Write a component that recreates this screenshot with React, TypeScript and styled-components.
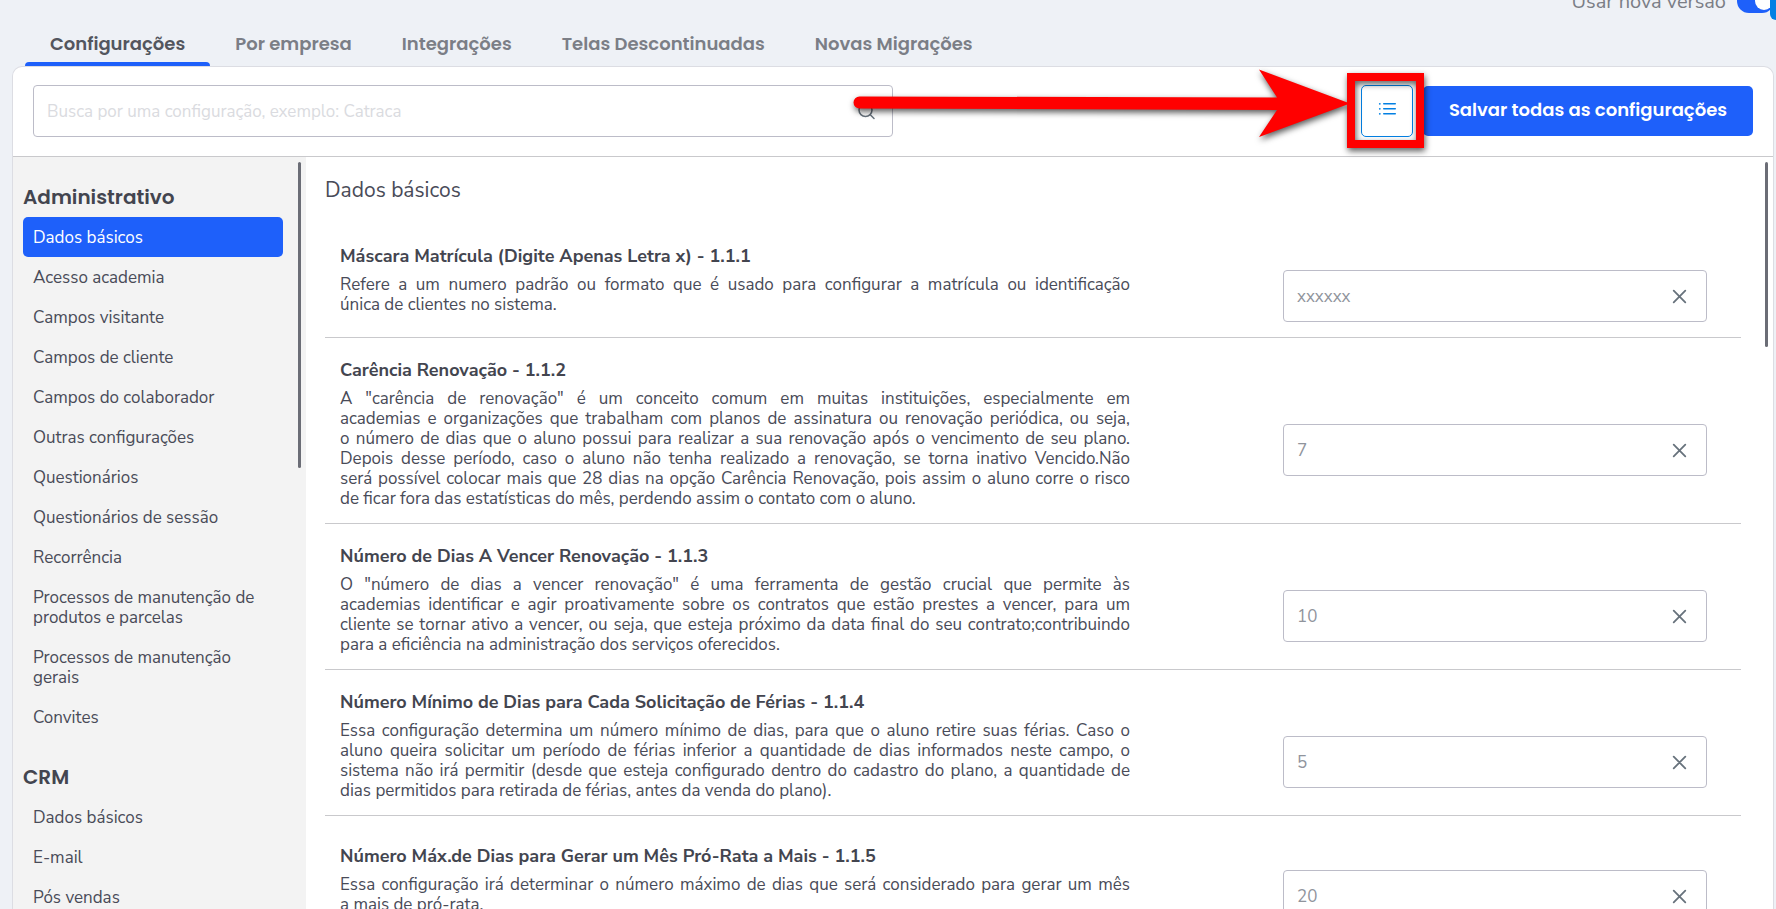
import React from "react";
import styled, { createGlobalStyle } from "styled-components";

const bodyFont = `"Nunito Sans", Lato, "Open Sans", sans-serif`;
const headingFont = `Poppins, Inter, "Noto Sans", sans-serif`;

const color = {
  page: "#eef1f6",
  blue: "#1e60fa",
  link: "#0380e3",
  text: "#494b58",
  heading: "#43454f",
  muted: "#7b7e86",
  value: "#90949c",
  placeholder: "#dadbe0",
  inputBorder: "#bcbcc8",
  line: "#c9c9cc",
  cardBorder: "#dcdde3",
  thumb: "#6b6d76",
  icon: "#67727c",
  mark: "#ff0000",
};

const GlobalStyle = createGlobalStyle`
  * { box-sizing: border-box; }
  body {
    margin: 0;
    background: ${color.page};
    color: ${color.text};
    font: 400 17px/20px ${bodyFont};
    overflow: hidden;
  }
  button, input { font: inherit; }
`;

const Page = styled.div`
  display: flex;
  flex-direction: column;
  height: 100vh;
  padding: 0 2px 0 12px;
  overflow: hidden;
`;

const VersionBar = styled.div`
  display: flex;
  justify-content: flex-end;
  height: 22px;
`;

const VersionToggle = styled.label`
  display: flex;
  align-items: center;
  gap: 11px;
  height: 24px;
  margin-top: -11px;
  color: ${color.muted};
  font-size: 20px;
  white-space: nowrap;
`;

const VersionText = styled.span`
  padding-top: 2px;
`;

const Switch = styled.input`
  appearance: none;
  width: 37px;
  height: 24px;
  margin: 0;
  border-radius: 12px;
  background: ${color.blue};

  &::before {
    content: "";
    display: block;
    width: 18px;
    height: 18px;
    margin: 3px 1px 3px auto;
    border-radius: 50%;
    background: #fff;
  }
`;

const SideHandle = styled.button`
  position: absolute;
  top: 0;
  right: 0;
  width: 6px;
  height: 20px;
  padding: 0;
  border: 0;
  border-bottom-left-radius: 6px;
  background: ${color.link};
`;

const Tabs = styled.nav`
  display: flex;
  padding-left: 13px;
`;

const Tab = styled.a<{ $active?: boolean }>`
  position: relative;
  height: 44px;
  padding: 12px 25px;
  color: ${(p) => (p.$active ? "#53565e" : color.muted)};
  font: 600 18px/20px ${headingFont};
  text-decoration: none;
  white-space: nowrap;

  &::after {
    content: "";
    position: absolute;
    inset: auto 0 0;
    height: 4px;
    border-radius: 4px 4px 0 0;
    background: ${(p) => (p.$active ? color.blue : "transparent")};
  }
`;

const Card = styled.main`
  display: flex;
  flex-direction: column;
  flex: 1;
  min-height: 0;
  border: 1px solid ${color.cardBorder};
  border-bottom: 0;
  border-radius: 10px 10px 0 0;
  background: #fff;
`;

const Toolbar = styled.div`
  display: flex;
  justify-content: space-between;
  align-items: center;
  height: 90px;
  flex: none;
  padding: 0 20px 1px;
  border-bottom: 1px solid ${color.line};
`;

const Field = styled.div`
  display: flex;
  align-items: center;
  height: 52px;
  padding-right: 19px;
  border: 1px solid ${color.inputBorder};
  border-radius: 4px;
  background: #fff;
`;

const SearchField = styled(Field)`
  width: 50%;
  padding-right: 17px;
`;

const TextInput = styled.input`
  flex: 1;
  min-width: 0;
  height: 48px;
  padding: 0 13px;
  border: 0;
  outline: 0;
  background: transparent;
  color: ${color.value};

  &::placeholder {
    color: ${color.placeholder};
    opacity: 1;
  }
`;

const IconButton = styled.button`
  display: flex;
  padding: 0;
  border: 0;
  background: none;
  color: ${color.icon};
`;

const Actions = styled.div`
  display: flex;
  align-items: center;
  gap: 10px;
`;

const MarkedSpot = styled.div`
  position: relative;
`;

const ListButton = styled.button`
  display: flex;
  align-items: center;
  justify-content: center;
  width: 52px;
  height: 52px;
  padding: 0 0 4px;
  border: 1px solid ${color.link};
  border-radius: 5px;
  background: #fff;
  color: ${color.link};
`;

const SaveButton = styled.button`
  height: 50px;
  min-width: 330px;
  padding: 0 24px 2px;
  border: 0;
  border-radius: 5px;
  background: ${color.blue};
  color: #fff;
  font: 600 18px/20px ${headingFont};
  white-space: nowrap;
`;

const Annotation = styled.svg`
  position: absolute;
  top: -25px;
  right: -20px;
  pointer-events: none;
  overflow: visible;
  filter: drop-shadow(1px 3px 3px rgba(0, 0, 0, 0.65));
`;

const Panels = styled.div`
  display: flex;
  flex: 1;
  min-height: 0;
`;

const Sidebar = styled.aside`
  position: relative;
  flex: none;
  width: 293px;
  padding: 0 23px 0 10px;
  background: #f3f3f3;
  overflow: hidden;
`;

const ScrollThumb = styled.div<{ $length: number }>`
  position: absolute;
  top: 5px;
  right: 5px;
  width: 3px;
  height: ${(p) => p.$length}px;
  border-radius: 2px;
  background: ${color.thumb};
`;

const Group = styled.section`
  padding-top: 20px;
`;

const GroupTitle = styled.h2`
  margin: 0;
  color: ${color.heading};
  font: 600 20px/40px ${headingFont};
`;

const MenuLink = styled.a<{ $active?: boolean }>`
  display: block;
  padding: 11px 10px 9px;
  border-radius: 5px;
  background: ${(p) => (p.$active ? color.blue : "transparent")};
  color: ${(p) => (p.$active ? "#fff" : color.text)};
  text-decoration: none;
`;

const Content = styled.section`
  position: relative;
  flex: 1;
  min-width: 0;
  padding: 17px 32px 0 19px;
  overflow: hidden;
`;

const ContentTitle = styled.h1`
  margin: 0;
  padding-bottom: 10px;
  font-size: 21px;
  font-weight: 400;
  line-height: 32px;
`;

const Setting = styled.div`
  display: grid;
  grid-template-columns: 790fr 424fr;
  column-gap: 153px;
  align-items: center;
  padding: 15px 34px 15px 15px;
  border-bottom: 1px solid ${color.line};
`;

const SettingText = styled.div`
  padding-top: 7px;
`;

const SettingName = styled.label`
  display: block;
  color: ${color.heading};
  font-size: 18px;
  font-weight: 700;
`;

const Description = styled.p`
  margin: 9px 0 -1px;
`;

const Line = styled.span`
  display: block;
  text-align: justify;
  text-align-last: justify;

  &:last-child {
    text-align-last: left;
  }
`;

const SettingField = styled.div`
  padding-top: 39px;
`;

const ListIcon = () => (
  <svg width="18" height="14" viewBox="0 0 18 14" fill="currentColor" aria-hidden="true">
    <rect x="5" y="1" width="13" height="1.500" rx="0.700" />
    <rect x="5" y="6" width="13" height="1.500" rx="0.700" />
    <rect x="5" y="11" width="13" height="1.500" rx="0.700" />
    <circle cx="1.800" cy="1.800" r="0.900" />
    <circle cx="1.800" cy="6.800" r="0.900" />
    <circle cx="1.800" cy="11.800" r="0.900" />
  </svg>
);

const SearchIcon = () => (
  <svg width="17" height="17" viewBox="0 0 17 17" fill="none" stroke="currentColor" strokeWidth="1.5" strokeLinecap="round" aria-hidden="true">
    <circle cx="7.5" cy="7" r="6.5" />
    <path d="M12.300 11.700 16 15.500" />
  </svg>
);

const ClearIcon = () => (
  <svg width="15" height="15" viewBox="0 0 15 15" fill="none" stroke="currentColor" strokeWidth="1.8" strokeLinecap="round" aria-hidden="true">
    <path d="M1.7 1.7 13.3 13.3M13.3 1.7 1.7 13.3" />
  </svg>
);

const tabs = ["Configurações", "Por empresa", "Integrações", "Telas Descontinuadas", "Novas Migrações"];

const groups = [
  {
    title: "Administrativo",
    items: [
      "Dados básicos",
      "Acesso academia",
      "Campos visitante",
      "Campos de cliente",
      "Campos do colaborador",
      "Outras configurações",
      "Questionários",
      "Questionários de sessão",
      "Recorrência",
      "Processos de manutenção de produtos e parcelas",
      "Processos de manutenção gerais",
      "Convites",
    ],
  },
  { title: "CRM", items: ["Dados básicos", "E-mail", "Pós vendas"] },
];

const settings = [
  {
    code: "1.1.1",
    name: "Máscara Matrícula (Digite Apenas Letra x)",
    value: "xxxxxx",
    lines: [
      "Refere a um numero padrão ou formato que é usado para configurar a matrícula ou identificação",
      "única de clientes no sistema.",
    ],
  },
  {
    code: "1.1.2",
    name: "Carência Renovação",
    value: "7",
    lines: [
      'A "carência de renovação" é um conceito comum em muitas instituições, especialmente em',
      "academias e organizações que trabalham com planos de assinatura ou renovação periódica, ou seja,",
      "o número de dias que o aluno possui para realizar a sua renovação após o vencimento de seu plano.",
      "Depois desse período, caso o aluno não tenha realizado a renovação, se torna inativo Vencido.Não",
      "será possível colocar mais que 28 dias na opção Carência Renovação, pois assim o aluno corre o risco",
      "de ficar fora das estatísticas do mês, perdendo assim o contato com o aluno.",
    ],
  },
  {
    code: "1.1.3",
    name: "Número de Dias A Vencer Renovação",
    value: "10",
    lines: [
      'O "número de dias a vencer renovação" é uma ferramenta de gestão crucial que permite às',
      "academias identificar e agir proativamente sobre os contratos que estão prestes a vencer, para um",
      "cliente se tornar ativo a vencer, ou seja, que esteja próximo da data final do seu contrato;contribuindo",
      "para a eficiência na administração dos serviços oferecidos.",
    ],
  },
  {
    code: "1.1.4",
    name: "Número Mínimo de Dias para Cada Solicitação de Férias",
    value: "5",
    lines: [
      "Essa configuração determina um número mínimo de dias, para que o aluno retire suas férias. Caso o",
      "aluno queira solicitar um período de férias inferior a quantidade de dias informados neste campo, o",
      "sistema não irá permitir (desde que esteja configurado dentro do cadastro do plano, a quantidade de",
      "dias permitidos para retirada de férias, antes da venda do plano).",
    ],
  },
  {
    code: "1.1.5",
    name: "Número Máx.de Dias para Gerar um Mês Pró-Rata a Mais",
    value: "20",
    lines: [
      "Essa configuração irá determinar o número máximo de dias que será considerado para gerar um mês",
      "a mais de pró-rata.",
    ],
  },
];

export default function App() {
  return (
    <Page>
      <GlobalStyle />
      <VersionBar>
        <VersionToggle>
          <VersionText>Usar nova versão</VersionText>
          <Switch type="checkbox" role="switch" defaultChecked />
        </VersionToggle>
      </VersionBar>
      <SideHandle type="button" aria-label="Abrir painel" />
      <Tabs>
        {tabs.map((tab, i) => (
          <Tab key={tab} href="#" $active={i === 0}>
            {tab}
          </Tab>
        ))}
      </Tabs>
      <Card>
        <Toolbar>
          <SearchField>
            <TextInput
              type="text"
              aria-label="Busca por uma configuração"
              placeholder="Busca por uma configuração, exemplo: Catraca"
            />
            <IconButton type="button" aria-label="Buscar">
              <SearchIcon />
            </IconButton>
          </SearchField>
          <Actions>
            <MarkedSpot>
              <ListButton type="button" aria-label="Lista">
                <ListIcon />
              </ListButton>
              <Annotation width="580" height="90" viewBox="0 0 580 90" fill={color.mark} aria-hidden="true">
                <path d="M6.500 36.500 424 37.500 406 9.500 497 43.500 406 77 424 50 6.500 48.500A6 6 0 0 1 6.500 36.500Z" />
                <rect x="498" y="17" width="69" height="67" fill="none" stroke={color.mark} strokeWidth="8" />
              </Annotation>
            </MarkedSpot>
            <SaveButton type="button">Salvar todas as configurações</SaveButton>
          </Actions>
        </Toolbar>
        <Panels>
          <Sidebar>
            {groups.map((group, g) => (
              <Group key={group.title}>
                <GroupTitle>{group.title}</GroupTitle>
                {group.items.map((item, i) => (
                  <MenuLink key={item} href="#" $active={g === 0 && i === 0}>
                    {item}
                  </MenuLink>
                ))}
              </Group>
            ))}
            <ScrollThumb $length={306} />
          </Sidebar>
          <Content>
            <ContentTitle>Dados básicos</ContentTitle>
            {settings.map((s) => (
              <Setting key={s.code}>
                <SettingText>
                  <SettingName htmlFor={s.code}>
                    {s.name} - {s.code}
                  </SettingName>
                  <Description>
                    {s.lines.map((line) => (
                      <Line key={line}>{line} </Line>
                    ))}
                  </Description>
                </SettingText>
                <SettingField>
                  <Field>
                    <TextInput id={s.code} type="text" defaultValue={s.value} />
                    <IconButton type="button" aria-label="Limpar">
                      <ClearIcon />
                    </IconButton>
                  </Field>
                </SettingField>
              </Setting>
            ))}
            <ScrollThumb $length={185} />
          </Content>
        </Panels>
      </Card>
    </Page>
  );
}
